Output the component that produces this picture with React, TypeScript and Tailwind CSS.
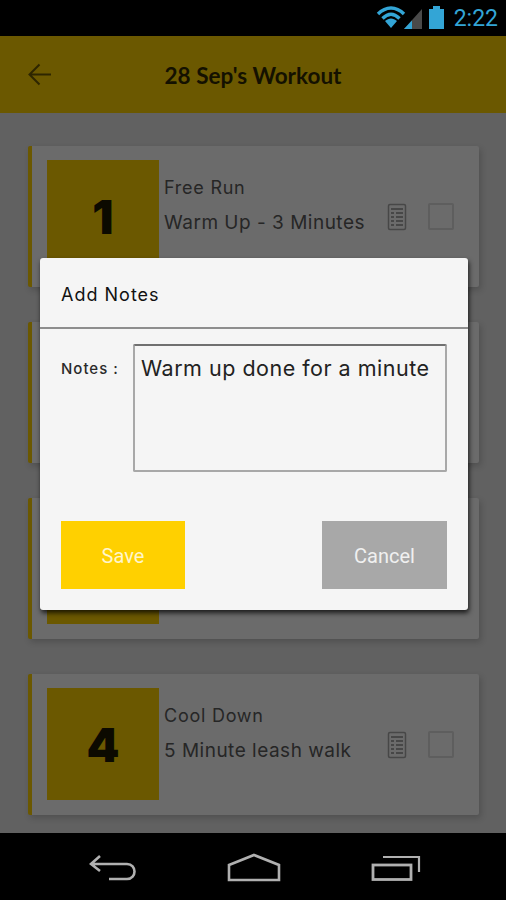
const cards = [
  { id: 1, n: '1', a: 'Free Run', b: 'Warm Up - 3 Minutes' },
  { id: 2, n: '', a: '', b: '' },
  { id: 3, n: '', a: '', b: '' },
  { id: 4, n: '4', a: 'Cool Down', b: '5 Minute leash walk' },
];

function NoteIcon() {
  return (
    <svg width="20" height="28" viewBox="0 0 20 28" fill="none" stroke="#3d3d3d" strokeWidth="1.3" className="shrink-0">
      <rect x="1.5" y="1.5" width="17" height="25" rx="1.5" stroke="#474747" strokeWidth="1.5" />
      <path d="M4 6h12M4 10h3M9 10h7M4 14h3M9 14h7M4 18h3M9 18h7M4 22h3M9 22h7" />
    </svg>
  );
}

function Card({ n, a, b }: { n: string; a: string; b: string }) {
  return (
    <div className="flex h-[141px] shrink-0 items-start rounded-[2px] border-l-[4px] border-[#6b5800] bg-[#6b6b6b] py-[14px] pl-[15px] pr-[25px] shadow-[2px_3px_6px_rgba(0,0,0,0.18)]">
      <div className="flex h-[112px] w-[112px] shrink-0 items-center justify-center bg-[#6b5800] pt-[2px] font-['Inter',sans-serif] text-[47px] font-black text-[#0c0a00]">
        {n}
      </div>
      {a && (
        <div className="flex grow items-start pl-[5px]">
          <div className="grow whitespace-nowrap font-['Inter',sans-serif] text-[#262626]">
            <div className="mt-[15px] text-[18px] leading-[26px] tracking-[0.75px]">{a}</div>
            <div className="mt-[9px] text-[19px] leading-[26px] tracking-[0.5px]">{b}</div>
          </div>
          <div className="mt-[43px] mr-[21px]"><NoteIcon /></div>
          <div className="mt-[43px] h-[27px] w-[26px] shrink-0 rounded-[2px] border-[2px] border-[#5e5e5e]" />
        </div>
      )}
    </div>
  );
}

export default function App() {
  return (
    <div className="relative flex h-[900px] w-[506px] flex-col overflow-hidden bg-[#616161] font-['Roboto',sans-serif]">
      <div className="flex h-[36px] shrink-0 items-center justify-end gap-[10px] bg-black pr-[8px]">
        <svg width="68" height="24" viewBox="0 0 68 24" fill="none" className="shrink-0">
          <path d="M2 8C10 0 20 0 28 8" stroke="#33a5d6" strokeWidth="3.4" />
          <path d="M6.5 12.5C12 7 18 7 23.5 12.5" stroke="#33a5d6" strokeWidth="3.4" />
          <path d="M9 15C13 11.5 17 11.5 21 15L15 22Z" fill="#33a5d6" />
          <path d="M28 23L46 3V23Z" fill="#4a4a4a" />
          <path d="M28 23L36 14.5V23Z" fill="#33a5d6" />
          <rect x="53" y="3" width="15" height="20" fill="#33a5d6" />
          <rect x="57" y="0" width="7" height="3" fill="#33a5d6" />
        </svg>
        <span className="text-[23px] leading-none text-[#33a5d6]">2:22</span>
      </div>
      <div className="relative flex h-[77px] shrink-0 items-center justify-center bg-[#6b5800] pt-[2px]">
        <svg width="24" height="24" viewBox="0 0 24 24" fill="none" stroke="#2e2600" strokeWidth="2" className="absolute left-[28px] top-[27px]">
          <path d="M23 11.5H2M11.5 1.5L1.5 11.5L11.5 21.5" />
        </svg>
        <span className="font-['Lato',sans-serif] text-[22.5px] font-bold text-[#141100]">28 Sep's Workout</span>
      </div>
      <div className="flex grow flex-col gap-[35px] overflow-hidden pl-[28px] pr-[27px] pt-[33px]">
        {cards.map((c) => (
          <Card key={c.id} n={c.n} a={c.a} b={c.b} />
        ))}
      </div>
      <div className="flex h-[67px] shrink-0 items-center justify-between bg-black pl-[89px] pr-[85px] pt-[2px]">
        <svg width="48" height="26" viewBox="0 0 48 26" fill="none" stroke="#b0b0b0" strokeWidth="2.6">
          <path d="M11 1L2 9L11 16M2 9H38C48 9 48 24 38 24H20" />
        </svg>
        <svg width="54" height="29" viewBox="0 0 54 29" fill="none" stroke="#b0b0b0" strokeWidth="2.6">
          <path d="M2 12L27 2L52 12V27H2Z" />
        </svg>
        <svg width="50" height="26" viewBox="0 0 50 26" fill="none" stroke="#b0b0b0">
          <rect x="2" y="10" width="38" height="14.5" strokeWidth="2.8" />
          <path d="M12 2H48V17" strokeWidth="2.2" />
        </svg>
      </div>

      <div className="absolute left-[40px] top-[258px] flex h-[352px] w-[428px] flex-col rounded-[3px] bg-[#f5f5f5] shadow-[1px_3px_5px_rgba(0,0,0,0.75)]">
        <div className="flex h-[71px] shrink-0 items-center border-b-[2px] border-[#8e8e8e] pl-[21px] pt-[4px] font-['Inter',sans-serif] text-[18px] font-normal tracking-[1px] text-[#111]">
          Add Notes
        </div>
        <div className="flex items-start px-[21px] pt-[15px]">
          <div className="w-[72px] shrink-0 pt-[15px] font-['Inter',sans-serif] text-[15px] font-medium leading-[20px] tracking-[1px] text-[#2a2a2a]">Notes :</div>
          <div className="h-[128px] grow whitespace-nowrap rounded-[2px] border-[2px] border-[#a8a8a8] border-t-[#707070] px-[6px] pt-[6px] font-['Inter',sans-serif] text-[21.5px] leading-[32px] tracking-[0.5px] text-[#222]">
            Warm up done for a minute
          </div>
        </div>
        <div className="mt-[49px] flex justify-between px-[21px]">
          <div className="flex h-[68px] w-[124px] items-center justify-center bg-[#ffd000] pt-[2px] text-[20px] text-[#fff6cc]">Save</div>
          <div className="flex h-[68px] w-[125px] items-center justify-center bg-[#a8a8a8] pt-[2px] text-[20px] text-[#f0f0f0]">Cancel</div>
        </div>
      </div>
    </div>
  );
}
